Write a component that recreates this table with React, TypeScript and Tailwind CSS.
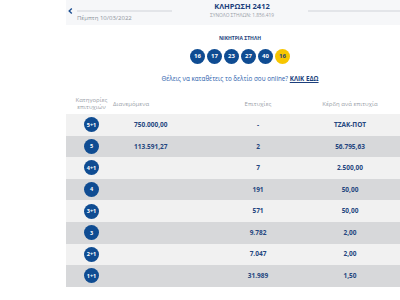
const balls = ["16", "17", "23", "27", "40"];

const rows = [
  { cat: "5+1", pot: "750.000,00", wins: "-", prize: "ΤΖΑΚ-ΠΟΤ" },
  { cat: "5", pot: "113.591,27", wins: "2", prize: "56.795,63" },
  { cat: "4+1", pot: "", wins: "7", prize: "2.500,00" },
  { cat: "4", pot: "", wins: "191", prize: "50,00" },
  { cat: "3+1", pot: "", wins: "571", prize: "50,00" },
  { cat: "3", pot: "", wins: "9.782", prize: "2,00" },
  { cat: "2+1", pot: "", wins: "7.047", prize: "2,00" },
  { cat: "1+1", pot: "", wins: "31.989", prize: "1,50" },
];

export default function App() {
  return (
    <div
      className="w-[400px] h-[300px] bg-white overflow-hidden"
      style={{ fontFamily: '"Open Sans", "DejaVu Sans", sans-serif' }}
    >
      <div className="ml-[66px] w-[348px]">
        {/* top bar */}
        <header className="h-[25px] bg-[#f6f7f9] flex">
          <div className="w-[110px] flex pt-[8px] pl-[2px]">
            <svg width="5" height="6" viewBox="0 0 5 6">
              <path d="M3.8 0.6 L1.2 3 L3.8 5.4" fill="none" stroke="#1d4f91" strokeWidth="1.4" />
            </svg>
            <div className="ml-[4px]">
              <div className="h-[2px] w-[95px] bg-[#e3e5e9] mt-[2px]" />
              <div className="text-[6px] leading-[7px] text-[#8d939c] mt-[3px]">Πέμπτη 10/03/2022</div>
            </div>
          </div>
          <div className="flex-1 flex flex-col items-center pt-[2px]">
            <div className="text-[7.5px] leading-[9px] font-bold text-[#1c3f7c]">ΚΛΗΡΩΣΗ 2412</div>
            <div className="text-[4.8px] leading-[5px] text-[#9aa0a8] mt-[2px]">ΣΥΝΟΛΟ ΣΤΗΛΩΝ: 1.856.419</div>
          </div>
          <div className="w-[106px] pt-[10px]">
            <div className="h-[2px] bg-[#e3e5e9]" />
          </div>
        </header>

        {/* winning column */}
        <div className="flex flex-col items-center">
          <div className="mt-[10px] text-[5px] leading-[6px] font-bold text-[#1c3f7c]">ΝΙΚΗΤΡΙΑ ΣΤΗΛΗ</div>
          <div className="mt-[8px] flex gap-[2px]">
            {balls.map((b, i) => (
              <div
                key={i}
                className="w-[15px] h-[15px] rounded-full bg-[#0f4c92] text-white text-[6px] font-bold flex items-center justify-center"
              >
                {b}
              </div>
            ))}
            <div className="w-[15px] h-[15px] rounded-full bg-[#f7c600] text-[#1c3f7c] text-[6px] font-bold flex items-center justify-center">
              16
            </div>
          </div>
          <div className="mt-[10px] text-[6.3px] leading-[9px] text-[#2d62ad]">
            Θέλεις να καταθέτεις το δελτίο σου online?{" "}
            <span className="font-bold text-[#1c3f7c] underline">ΚΛΙΚ ΕΔΩ</span>
          </div>
        </div>

        {/* results table */}
        <div className="mt-[11px]">
          <div className="grid grid-cols-[47px_95px_100px_84px] h-[20px] items-center text-[6px] leading-[7px] text-[#9aa0a8]">
            <div className="-ml-[2px] w-[55px] text-center">
              Κατηγορίες
              <br />
              επιτυχιών
            </div>
            <div>Διανεμόμενα</div>
            <div className="text-center">Επιτυχίες</div>
            <div className="text-center">Κέρδη ανά επιτυχία</div>
          </div>
          {rows.map((r, i) => (
            <div
              key={i}
              className={`grid grid-cols-[47px_95px_100px_84px] h-[21.6px] items-center text-[6.5px] font-bold text-[#24467f] ${
                i % 2 === 0 ? "bg-[#f1f1f1]" : "bg-[#d7d8da]"
              }`}
            >
              <div className="pl-[18px]">
                <div className="w-[15px] h-[15px] rounded-full bg-[#0f4c92] text-white text-[5.5px] flex items-center justify-center">
                  {r.cat}
                </div>
              </div>
              <div className="pl-[21px]">{r.pot}</div>
              <div className="text-center">{r.wins}</div>
              <div className="text-center">{r.prize}</div>
            </div>
          ))}
        </div>
      </div>
    </div>
  );
}
